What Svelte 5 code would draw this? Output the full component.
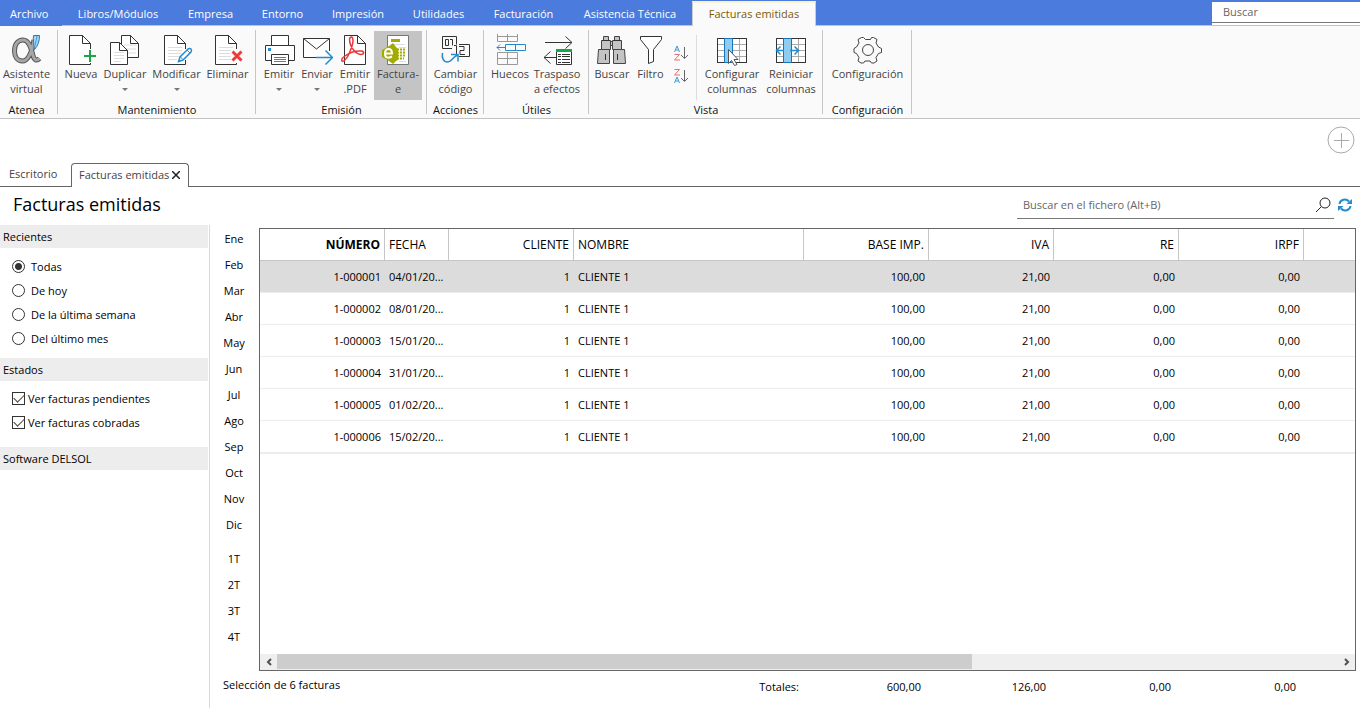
<script>
  const menu = ['Archivo', 'Libros/Módulos', 'Empresa', 'Entorno', 'Impresión', 'Utilidades', 'Facturación', 'Asistencia Técnica', 'Facturas emitidas'];
  const months = ['Ene', 'Feb', 'Mar', 'Abr', 'May', 'Jun', 'Jul', 'Ago', 'Sep', 'Oct', 'Nov', 'Dic'];
  const quarters = ['1T', '2T', '3T', '4T'];
  const recents = ['Todas', 'De hoy', 'De la última semana', 'Del último mes'];
  const columns = [
    { name: 'NÚMERO', num: true, strong: true },
    { name: 'FECHA' },
    { name: 'CLIENTE', num: true },
    { name: 'NOMBRE' },
    { name: 'BASE IMP.', num: true },
    { name: 'IVA', num: true },
    { name: 'RE', num: true },
    { name: 'IRPF', num: true }
  ];
  const rows = ['04/01/20...', '08/01/20...', '15/01/20...', '31/01/20...', '01/02/20...', '15/02/20...'].map((date, i) => [
    `1-00000${i + 1}`, date, '1', 'CLIENTE 1', '100,00', '21,00', '0,00', '0,00'
  ]);
  const totals = ['600,00', '126,00', '0,00', '0,00'];

  let recent = $state('Todas');
  let pending = $state(true);
  let paid = $state(true);
  let selected = $state(0);
</script>

{#snippet page(x, y, w, h)}
  <path d="M{x} {y}h{w - 8}l8 8v{h - 8}h-{w}z" fill="#fff" stroke="#333" />
  <path d="M{x + w - 8} {y}v8h8" fill="none" stroke="#333" />
{/snippet}

{#snippet tool(icon, lines, arrow = false, active = false)}
  <button class="tool" class:active>
    <svg width="32" height="32" viewBox="0 0 32 32" fill="none" stroke="#333" aria-hidden="true">
      {#if icon === 'alpha'}
        <path d="M23 6c-2 11-5 21-11.500 21-5 0-8-4-8-10C3.500 10 7 6 12 6c6 0 8 8 10 15.500 1 4.500 3.500 6 6.500 3" stroke="#555" stroke-width="5" />
        <path d="M23 6c-2 11-5 21-11.500 21-5 0-8-4-8-10C3.500 10 7 6 12 6c6 0 8 8 10 15.500 1 4.500 3.500 6 6.500 3" stroke="#a6a6a6" stroke-width="3" />
        <path d="M22.500 1.500h6c0 6-1.500 10-5 14-1-5-1.500-10-1-14z" fill="#a6d5f5" stroke="#2878b4" />
        <path d="M26 2l-2.500 12" stroke="#4a9ad4" />
      {:else if icon === 'new'}
        <path d="M25.500 15V9.500l-8-8h-13v29h21V29" fill="#fff" stroke="none" />
        <path d="M25.500 15V9.500l-8-8h-13v29h21V29M17.500 1.500v8h8" />
        <path d="M25 16v12M19 22h12" stroke="#1aa54a" stroke-width="2" />
      {:else if icon === 'copy'}
        {@render page(12.5, 1.5, 17, 22)}
        <path d="M15 11h12M15 15h12M15 19h12" stroke="#ddd" />
        {@render page(1.5, 8.5, 17, 22)}
        <path d="M5 18.500h10M5 21.500h10M5 24.500h10M5 27.500h7" stroke="#ddd" />
      {:else if icon === 'edit'}
        <path d="M24.500 15V9.500l-8-8h-13v29h21V26" fill="#fff" stroke="none" />
        <path d="M24.500 15V9.500l-8-8h-13v29h21V26M16.500 1.500v8h8" />
        <path d="M7 13.500h14M7 16.500h14M7 19.500h13M7 22.500h11M7 25.500h9" stroke="#ddd" />
        <path d="M17.500 27.500l1.500-4.500 8-8q2-1 3 0t0 3l-8 8z" fill="#fff" stroke="#268bcc" stroke-width="1.500" />
        <path d="M19.500 23l2.500 2.500M26 16l3 3" stroke="#268bcc" />
      {:else if icon === 'delete'}
        <path d="M24.500 15V9.500l-8-8h-13v29h21V29" fill="#fff" stroke="none" />
        <path d="M24.500 15V9.500l-8-8h-13v29h21V29M16.500 1.500v8h8" />
        <path d="M7 13.500h14M7 16.500h12M7 19.500h11M7 22.500h12M7 25.500h12" stroke="#ddd" />
        <path d="M20.500 17.500l9 9M29.500 17.500l-9 9" stroke="#ee3b38" stroke-width="3" />
      {:else if icon === 'print'}
        <path d="M8.500 11V1.500h17V11" fill="#fff" />
        <path d="M8 26.500H2.500v-15h29v15H26" fill="#fff" />
        <path d="M8.500 20.500h17v10h-17z" fill="#fff" />
        <path d="M11 23.500h12M11 25.500h12M11 27.500h12" stroke="#777" />
        <path d="M5 14h3v3H5z" fill="#268bcc" stroke="none" />
      {:else if icon === 'mail'}
        <path d="M21 23.500H2.500v-19h26V17" fill="#fff" />
        <path d="M2.500 4.500L15.500 15 28.500 4.500" />
        <path d="M15 23.500h16M24.500 16.500l7 7-7 7" stroke="#268bcc" stroke-width="1.500" />
      {:else if icon === 'pdf'}
        {@render page(5.5, 1.5, 21, 29)}
        <path d="M12.500 3c-2.500 0-2.500 4-.5 9 2.500 5 5.500 8 9.500 8.500 4 0 4-3 1-3.500-6-.500-12 1.500-16.500 5-3 2-4 4-3 5s4-1 6.500-6c2.500-6 4.500-10 4.500-14 0-2-.5-4-1.500-4z" stroke="#e9363a" stroke-width="1.500" />
      {:else if icon === 'efactura'}
        <path d="M5.500 1.500h21v29h-21z" fill="#fff" stroke="#777" />
        <path d="M9 5h9v3H9z" fill="#a3ab00" stroke="none" />
        <path d="M9 10.500h14M17 13.500h7M17 27.500h7" stroke="#ddd" />
        <path d="M11 9l3 4 2 2v11l-2 1-3 3-4-3-7-4v-7l7-4z" fill="#a3ab00" stroke="none" />
        <path d="M3 19.500h7c0-6-7-6-7 0s5 4 7 3" stroke="#fff" stroke-width="2" />
        <path d="M15 15.500h8M15 18.500h9M15 21.500h9M15 24.500h7" stroke="#a3ab00" stroke-width="2" stroke-dasharray="2 1" />
      {:else if icon === 'code'}
        <path d="M12 14.500H2.500v-12h14v8M19 10.500h10.500v12H19" />
        <path d="M5.500 5.500h3v6h-3zM10 5.500h2.500v6M14 11.500h2.500v9M19 12.500h5v4h-4v4h5" />
        <path d="M2.500 19c-1 5 1 9 5 9s4-4 10-7M11 20.500h7v7" stroke="#268bcc" stroke-width="1.500" />
      {:else if icon === 'gaps'}
        <path d="M3.500 0v7.500h20V0M3.500 2.500h20M13.500 0v7.500M3.500 18.500h20v12h-20zM3.500 24.500h20M13.500 18.500v12" stroke="#999" />
        <path d="M11.500 10.500h20v6h-20zM21.500 10.500v6M3 13.500h8M6 10.500l-3 3 3 3" stroke="#268bcc" />
      {:else if icon === 'transfer'}
        <path d="M4 8.500h26.500M24.500 2.500l6.500 6-6.500 6M15 23.500H3M9.500 17.500l-6.500 6 6.500 6" />
        <path d="M15.500 15.500h15v15h-15z" fill="#fff" />
        <path d="M15 16.500h16" stroke="#1aa54a" stroke-width="3" />
        <path d="M17 20.500h3M21 20.500h8M17 22.500h3M21 22.500h8M17 25.500h3M21 25.500h8M17 28.500h3M21 28.500h8" />
      {:else if icon === 'binoculars'}
        <path d="M7.500 2.500h5v4h2v9h-9v-9h2zM18.500 2.500h5v4h2v9h-9v-9h2zM14.500 7.500h2v4h-2zM2.500 15.500h11v14h-12zM17.500 15.500h11l1 14h-12z" fill="#c4c4c4" stroke="#444" />
        <path d="M9.500 20v6M21.500 20v6M6 6.500h8M17 6.500h8" />
      {:else if icon === 'filter'}
        <path d="M5.500 2.500h21v3l-8 10v12l-5 2v-14l-8-10z" fill="#fff" />
      {:else if icon === 'columns' || icon === 'reset'}
        <path d="M1.500 4.500h29v24h-29z" fill="#fff" />
        <path d="M2 10.500h28M2 16.500h28M2 22.500h28M23.500 5v23" stroke="#aaa" />
        <path d="M1.500 4.500h29v24h-29z" />
        {#if icon === 'columns'}
          <path d="M8.500 4.500h8v24h-8z" fill="#8fccf2" stroke="#1674b8" />
          <path d="M12.500 15.500v14l3-3 3 5 2.500-1-3-5h4z" fill="#fff" stroke="#555" />
        {:else}
          <path d="M8.500 4.500h8v24h-8z" fill="#8fccf2" stroke="#1674b8" />
          <path d="M9 16.500H2M5.500 12.500l-4 4 4 4M15 16.500h8M19.500 12.500l4 4-4 4" stroke="#268bcc" stroke-width="1.500" />
        {/if}
      {:else if icon === 'gear'}
        <path d="M9.500 3.500h2l2 2h5l1-2h2l3.500 2-1 3.500 2.500 4 3 1.500v4l-3 1-2.500 4 1 3.500-3 2h-2.500l-1.500-2h-5l-1.500 2H9l-3-2 1-3.500-2.500-4-2.500-1v-4l2.500-1.500L7 9 6 5.500z" stroke="#444" />
        <circle cx="16" cy="16" r="5.500" stroke="#444" />
      {/if}
    </svg>
    {#each lines as line}<span>{line}</span>{/each}
    {#if arrow}<i class="caret"></i>{/if}
  </button>
{/snippet}

{#snippet sort(first, second)}
  <button class="sort" aria-label="Ordenar {first}-{second}">
    <svg width="16" height="16" viewBox="0 0 16 16" fill="none" aria-hidden="true">
      {#each [first, second] as letter, i}
        <path d={letter === 'A' ? 'M1.500 7l2.500-6 2.500 6M2.500 5h3' : 'M1.500 1.500h5l-5 5.500h5.500'} transform="translate(0 {i * 8})" stroke={letter === 'A' ? '#3e9bd4' : '#e66e6e'} />
      {/each}
      <path d="M11.500 2v11M8 10l3.500 3.500L15 10" stroke="#666" />
    </svg>
  </button>
{/snippet}

<div class="app">
  <nav class="menu">
    <div class="tabs">
      {#each menu as item, i}
        <button class:file={i === 0} class:current={i === menu.length - 1}>{item}</button>
      {/each}
    </div>
    <div class="global"><input type="search" placeholder="Buscar" aria-label="Buscar" /></div>
  </nav>

  <div class="ribbon">
    <section class="first">
      <div class="tools">{@render tool('alpha', ['Asistente', 'virtual'])}</div>
      <h2>Atenea</h2>
    </section>
    <section>
      <div class="tools edit">
        {@render tool('new', ['Nueva'])}
        {@render tool('copy', ['Duplicar'], true)}
        {@render tool('edit', ['Modificar'], true)}
        {@render tool('delete', ['Eliminar'])}
      </div>
      <h2>Mantenimiento</h2>
    </section>
    <section>
      <div class="tools emit">
        {@render tool('print', ['Emitir'], true)}
        {@render tool('mail', ['Enviar'], true)}
        {@render tool('pdf', ['Emitir', '.PDF'])}
        {@render tool('efactura', ['Factura-', 'e'], false, true)}
      </div>
      <h2>Emisión</h2>
    </section>
    <section>
      <div class="tools">{@render tool('code', ['Cambiar', 'código'])}</div>
      <h2>Acciones</h2>
    </section>
    <section>
      <div class="tools utils">
        {@render tool('gaps', ['Huecos'])}
        {@render tool('transfer', ['Traspaso', 'a efectos'])}
      </div>
      <h2>Útiles</h2>
    </section>
    <section>
      <div class="tools view">
        {@render tool('binoculars', ['Buscar'])}
        {@render tool('filter', ['Filtro'])}
        <div class="sorts">
          {@render sort('A', 'Z')}
          {@render sort('Z', 'A')}
        </div>
        {@render tool('columns', ['Configurar', 'columnas'])}
        {@render tool('reset', ['Reiniciar', 'columnas'])}
      </div>
      <h2>Vista</h2>
    </section>
    <section>
      <div class="tools">{@render tool('gear', ['Configuración'])}</div>
      <h2>Configuración</h2>
    </section>
  </div>

  <div class="strip">
    <button aria-label="Añadir">
      <svg width="28" height="28" viewBox="0 0 28 28" fill="none" stroke="#aaa"><circle cx="14" cy="14" r="13" /><path d="M14.500 7v15M7 14.500h15" /></svg>
    </button>
  </div>

  <div class="docs">
    <button class="doc">Escritorio</button>
    <div class="doc open">
      <button>Facturas emitidas</button>
      <button aria-label="Cerrar"><svg width="8" height="8" viewBox="0 0 8 8" stroke="#222" stroke-width="1.500"><path d="M0 0l8 8M8 0L0 8" /></svg></button>
    </div>
    <div class="rest"></div>
  </div>

  <header>
    <h1>Facturas emitidas</h1>
    <div class="find">
      <input type="search" placeholder="Buscar en el fichero (Alt+B)" aria-label="Buscar en el fichero" />
      <svg width="16" height="16" viewBox="0 0 16 16" fill="none" stroke="#222"><circle cx="10" cy="6" r="5" /><path d="M6.500 9.500L1 15" /></svg>
    </div>
    <button class="refresh" aria-label="Actualizar">
      <svg width="14" height="14" viewBox="0 0 14 14" fill="none" stroke="#268bcc" stroke-width="2"><path d="M1.500 6C2 1.500 8 0 11 3.500M12.500 8C12 12.500 6 14 3 10.500" /><path d="M14 1v5H8.500zM0 13V8h5.500z" fill="#268bcc" stroke="none" /></svg>
    </button>
  </header>

  <div class="body">
    <aside>
      <h3>Recientes</h3>
      <div class="options">
        {#each recents as item}
          <label><input type="radio" name="recent" value={item} bind:group={recent} />{item}</label>
        {/each}
      </div>
      <h3>Estados</h3>
      <div class="options checks">
        <label><input type="checkbox" bind:checked={pending} />Ver facturas pendientes</label>
        <label><input type="checkbox" bind:checked={paid} />Ver facturas cobradas</label>
      </div>
      <h3>Software DELSOL</h3>
    </aside>

    <main>
      <div class="content">
        <div class="periods">
          <div>{#each months as m}<button>{m}</button>{/each}</div>
          <div>{#each quarters as q}<button>{q}</button>{/each}</div>
        </div>
        <div class="grid">
          <table>
            <colgroup>
              <col class="mid" /><col class="date" /><col class="mid" /><col class="name" />
              <col class="mid" /><col class="mid" /><col class="mid" /><col class="mid" /><col />
            </colgroup>
            <thead>
              <tr>
                {#each columns as c}<th class:num={c.num} class:strong={c.strong}>{c.name}</th>{/each}
                <th></th>
              </tr>
            </thead>
            <tbody>
              {#each rows as row, r}
                <tr class:selected={selected === r} onclick={() => (selected = r)}>
                  {#each row as cell, i}<td class:num={columns[i].num}>{cell}</td>{/each}
                  <td></td>
                </tr>
              {/each}
            </tbody>
          </table>
          <div class="scroll">
            <button aria-label="Izquierda"><svg width="8" height="8" viewBox="0 0 8 8" fill="none" stroke="#505050" stroke-width="2"><path d="M6 1L3 4l3 3" /></svg></button>
            <div class="track"><div class="thumb"></div></div>
            <button aria-label="Derecha"><svg width="8" height="8" viewBox="0 0 8 8" fill="none" stroke="#505050" stroke-width="2"><path d="M2 1l3 3-3 3" /></svg></button>
          </div>
        </div>
      </div>
      <footer>
        <div class="summary"><span>Selección de 6 facturas</span><span class="total">Totales:</span></div>
        {#each totals as t}<span class="total value">{t}</span>{/each}
      </footer>
    </main>
  </div>
</div>

<style>
  :global(body) { margin: 0; background: #fff; }
  .app {
    display: flex; flex-direction: column; min-height: 100vh;
    font: 11px/15px "Open Sans", "Noto Sans", sans-serif; color: #000;
  }
  .app * { box-sizing: border-box; }
  button { font: inherit; color: inherit; background: none; border: 0; padding: 0; margin: 0; }
  input { font: inherit; margin: 0; }
  h1, h2, h3 { margin: 0; font-weight: 400; }
  svg { display: block; flex: none; }

  .menu { display: flex; justify-content: space-between; height: 26px; background: #4b7bdc; border-bottom: 1px solid #c3c3c3; }
  .tabs { display: grid; grid-template-columns: 62px 112px 73px 71px 80px 81px 89px 124px 124px; }
  .tabs button { height: 26px; color: #fff; padding-top: 1px; }
  .tabs .file { background: #4b7bdc; text-align: left; padding-left: 10px; }
  .tabs .current { margin-top: 1px; height: 25px; background: #fafafa; color: #7c5a06; border: 1px solid #ccc; border-top: 2px solid #fbf3cf; border-bottom: 0; padding: 0 0 2px; }
  .global { width: 148px; padding-top: 2px; background: linear-gradient(#4b7bdc 2px, #fff 2px); }
  .global input { display: block; width: 100%; height: 21px; border: 0; border-bottom: 1px solid #777; padding: 0 11px 2px; background: #fff; outline: 0; }
  input::placeholder { color: #666; opacity: 1; }

  .ribbon { display: grid; grid-template-columns: 58px 198px 171px 57px 105px 234px 89px; height: 93px; background: #fafafa; border-bottom: 1px solid #c3c3c3; }
  .ribbon section { display: flex; flex-direction: column; padding-top: 5px; background: linear-gradient(#c6c6c6, #c6c6c6) right 4px / 1px 84px no-repeat; }
  .ribbon .first { padding-right: 5px; }
  .ribbon h2 { font-size: 11px; line-height: 15px; text-align: center; margin-top: 2px; color: #111; }
  .tools { display: grid; height: 69px; }
  .tools.edit { grid-template-columns: 38px 50px 53px 49px; padding-left: 4px; }
  .tools.emit { grid-template-columns: 38px 38px 38px 48px; padding-left: 4px; }
  .tools.utils { grid-template-columns: 44px 50px; padding-left: 4px; }
  .tools.view { grid-template-columns: 38px 39px 27px 70px 48px; padding-left: 4px; }
  .tool { display: flex; flex-direction: column; align-items: center; padding-top: 3px; color: #444; white-space: nowrap; }
  .tool.active { background: #c4c4c4; }
  .caret { margin-top: 7px; border: 3px solid transparent; border-top-color: #777; border-bottom: 0; }
  .sorts { display: flex; flex-direction: column; justify-content: flex-end; align-items: center; gap: 7px; padding: 0 5px 16px 0; margin-top: 4px; border-right: 1px solid #ddd; }

  .strip { display: flex; justify-content: flex-end; padding: 7px 5px 9px; }
  .docs { display: flex; height: 24px; color: #444; }
  .doc { padding: 0 9px 2px; border-bottom: 1px solid #666; width: 71px; text-align: left; white-space: nowrap; }
  .doc.open { display: flex; align-items: center; gap: 3px; width: 118px; border: 1px solid #666; border-bottom: 0; border-radius: 4px 4px 0 0; padding: 0 7px 2px; }
  .rest { flex: 1; border-bottom: 1px solid #666; }

  header { display: flex; align-items: center; height: 38px; padding: 0 8px 4px 13px; }
  h1 { flex: 1; font-size: 18px; line-height: 24px; }
  .find { display: flex; align-items: center; width: 317px; height: 28px; margin-top: 2px; border-bottom: 1px solid #777; padding-right: 3px; }
  .find input { flex: 1; border: 0; outline: 0; padding: 0 6px 1px; background: none; }
  .refresh { margin: 2px 0 0 4px; }

  .body { flex: 1; display: grid; grid-template-columns: 210px 1fr; }
  aside { border-right: 1px solid #d9d9d9; padding-right: 1px; }
  h3 { font-size: 11px; line-height: 23px; height: 23px; padding-left: 3px; background: #ededed; }
  .options { padding: 6px 0 8px; }
  .options label { display: flex; align-items: center; gap: 6px; height: 24px; padding-left: 12px; }
  .options.checks { padding: 5px 0 13px; }
  .checks label { gap: 3px; }
  .options input { appearance: none; width: 13px; height: 13px; border: 1px solid #333; background: #fff; flex: none; }
  .options input[type="radio"] { border-radius: 50%; }
  .options input[type="radio"]:checked { background: radial-gradient(circle, #333 3px, #fff 4px); }
  .checks input { display: grid; place-items: center; }
  .checks input:checked::before { content: ""; width: 9px; height: 5px; margin-top: -3px; border: solid #444; border-width: 0 0 1px 1px; transform: rotate(-45deg); }

  main { display: flex; flex-direction: column; min-width: 0; }
  .content { flex: 1; display: grid; grid-template-columns: 49px 1fr; padding: 3px 4px 0 0; }
  .periods { display: flex; flex-direction: column; gap: 8px; margin-top: -3px; }
  .periods button { display: block; width: 48px; height: 26px; }
  .grid { display: flex; flex-direction: column; min-width: 0; border: 1px solid #666; }
  table { width: 100%; table-layout: fixed; border-collapse: separate; border-spacing: 0; font-size: 11px; }
  .mid { width: 125px; }
  .date { width: 64px; }
  .name { width: 230px; }
  th { height: 32px; padding: 0 4px; font-weight: 400; font-size: 12px; text-align: left; border-right: 1px solid #c6c6c6; border-bottom: 1px solid #c6c6c6; white-space: nowrap; }
  th:last-child { border-right: 0; }
  td { height: 32px; padding: 0 4px; border-bottom: 1px solid #ededed; white-space: nowrap; }
  tbody tr:last-child td { border-bottom-width: 2px; height: 33px; }
  .num { text-align: right; }
  .strong { font-weight: 700; }
  .selected td { background: #dcdcdc; }
  .scroll { display: flex; height: 16px; margin-top: auto; background: #efefef; }
  .scroll button { display: grid; place-items: center; width: 17px; }
  .track { flex: 1; }
  .thumb { width: 65.5%; height: 15px; background: #cdcdcd; }

  footer { display: grid; grid-template-columns: 593px repeat(4, 125px); height: 37px; padding-top: 6px; }
  .summary { display: flex; justify-content: space-between; padding: 0 4px 0 13px; }
  .total { text-align: right; padding-top: 2px; }
  .value { padding-right: 7px; }
</style>
